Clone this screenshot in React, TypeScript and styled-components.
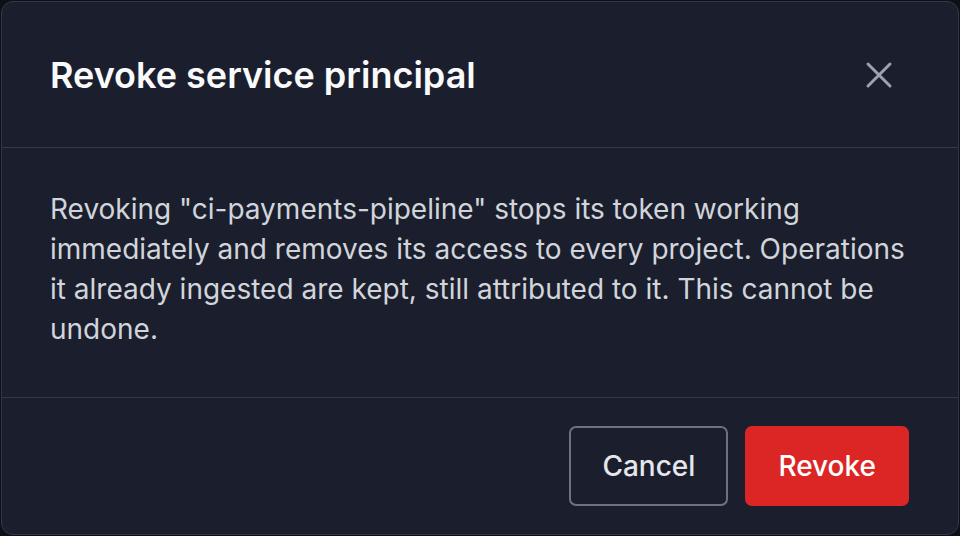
import styled, { createGlobalStyle } from "styled-components"

const Global = createGlobalStyle`
  html, body {
    margin: 0;
    padding: 0;
    background: #0c1017;
  }
  * {
    box-sizing: border-box;
  }
`

const CloseIcon = () => (
  <svg width="48" height="48" viewBox="0 0 48 48" fill="none">
    <path d="M13 13 L35 35 M35 13 L13 35" stroke="#9ca3af" strokeWidth="3" strokeLinecap="round" />
  </svg>
)

const App = () => {
  return (
    <>
      <Global />
      <Page>
        <Dialog>
          <Header>
            <Title>Revoke service principal</Title>
            <CloseButton aria-label="Close">
              <CloseIcon />
            </CloseButton>
          </Header>
          <Body>
            Revoking "ci-payments-pipeline" stops its token working immediately and removes its access to every project. Operations it already ingested are kept, still attributed to it. This cannot be undone.
          </Body>
          <Footer>
            <Button>Cancel</Button>
            <Button danger>Revoke</Button>
          </Footer>
        </Dialog>
      </Page>
    </>
  )
}
export default App

const Page = styled.div`
  width: 960px;
  height: 536px;
  padding: 1px;
  font-family: Inter, "Noto Sans", sans-serif;
`

const Dialog = styled.div`
  height: 100%;
  display: flex;
  flex-direction: column;
  background: #1b1f2d;
  border: 1px solid #323846;
  border-radius: 12px;
  overflow: hidden;
`

const Header = styled.div`
  height: 146px;
  flex-shrink: 0;
  display: flex;
  align-items: center;
  justify-content: space-between;
  padding: 0 55px 0 48px;
  border-bottom: 1px solid #323846;
`

const Title = styled.h2`
  margin: 0;
  font-size: 36px;
  font-weight: 600;
  color: #f9fafb;
`

const CloseButton = styled.button`
  width: 48px;
  height: 48px;
  padding: 0;
  border: none;
  background: transparent;
  display: flex;
  align-items: center;
  justify-content: center;
  cursor: pointer;
`

const Body = styled.p`
  margin: 0;
  height: 250px;
  flex-shrink: 0;
  padding: 41px 48px 0 48px;
  font-size: 28px;
  line-height: 40px;
  color: #d1d5db;
  border-bottom: 1px solid #323846;
`

const Footer = styled.div`
  flex: 1;
  display: flex;
  align-items: center;
  justify-content: flex-end;
  gap: 17px;
  padding: 0 49px 0 48px;
`

const Button = styled.button<{ danger?: boolean }>`
  height: 80px;
  padding: 0 31px;
  border-radius: 7px;
  font-family: Inter, "Noto Sans", sans-serif;
  font-size: 28px;
  font-weight: 500;
  cursor: pointer;
  border: 2px solid ${(p) => (p.danger ? "#dc2626" : "#6b7280")};
  background: ${(p) => (p.danger ? "#dc2626" : "transparent")};
  color: ${(p) => (p.danger ? "#ffffff" : "#e5e7eb")};
`
